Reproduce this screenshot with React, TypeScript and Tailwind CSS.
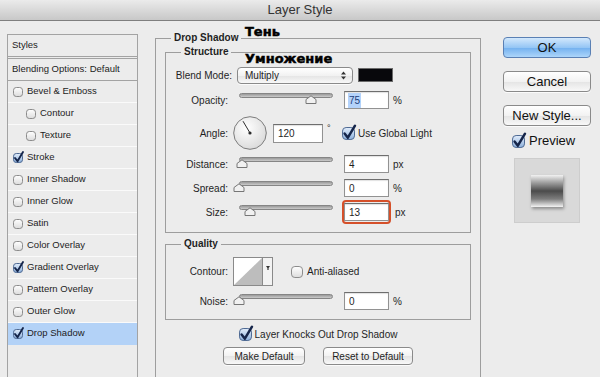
import React, { useId } from 'react';

const styleRows: { label: string; checked?: boolean; indent?: boolean; active?: boolean }[] = [
  { label: 'Bevel & Emboss' },
  { label: 'Contour', indent: true },
  { label: 'Texture', indent: true },
  { label: 'Stroke', checked: true },
  { label: 'Inner Shadow' },
  { label: 'Inner Glow' },
  { label: 'Satin' },
  { label: 'Color Overlay' },
  { label: 'Gradient Overlay', checked: true },
  { label: 'Pattern Overlay' },
  { label: 'Outer Glow' },
  { label: 'Drop Shadow', checked: true, active: true },
];

const CheckBox: React.FC<{ checked?: boolean; size?: number }> = ({ checked = false, size = 10 }) => {
  const id = 'cb' + useId().replace(/[^a-zA-Z0-9]/g, '');
  const s = size;
  return (
    <svg width={s} height={s} viewBox={`0 0 ${s} ${s}`} className="shrink-0 overflow-visible">
      <defs>
        <linearGradient id={id} x1="0" y1="0" x2="0" y2="1">
          <stop offset="0" stopColor={checked ? '#e2edfb' : '#ffffff'} />
          <stop offset="1" stopColor={checked ? '#8db0dc' : '#dcdcdc'} />
        </linearGradient>
      </defs>
      <rect
        x="0.5"
        y="0.5"
        width={s - 1}
        height={s - 1}
        rx={s * 0.28}
        fill={`url(#${id})`}
        stroke={checked ? '#4f6a93' : '#8c8c8c'}
      />
      {checked && (
        <path
          d={`M${s * 0.2} ${s * 0.5} L${s * 0.45} ${s * 0.82} L${s * 1.0} ${-s * 0.1}`}
          fill="none"
          stroke="#15254a"
          strokeWidth={s * 0.19}
          strokeLinecap="round"
          strokeLinejoin="round"
        />
      )}
    </svg>
  );
};

// track is 94px wide, thumb centre given in px from the left end
const Slider: React.FC<{ pos: number }> = ({ pos }) => (
  <div className="relative ml-[11px] h-[18px] w-[94px] shrink-0">
    <div className="mt-[2px] h-[5px] w-full rounded-full border border-[#858585] bg-gradient-to-b from-[#9a9a9a] to-[#cbcbcb]" />
    <svg className="absolute top-[4px]" style={{ left: pos - 6 }} width="12" height="9" viewBox="0 0 12 9">
      <path d="M1 8.5 V4.5 L6 0.8 L11 4.5 V8.5 Z" fill="#f1f1f1" stroke="#767676" strokeLinejoin="round" />
    </svg>
  </div>
);

const Field: React.FC<{ value: string; selected?: boolean }> = ({ value, selected }) => (
  <div className="flex h-[18px] w-[45px] shrink-0 items-center border border-[#929292] border-t-[#6e6e6e] bg-white pl-[3px] shadow-[inset_0_1px_1px_rgba(0,0,0,0.12)]">
    {selected ? <span className="bg-[#b4d3fb] px-[1px] text-[#1c3f7a]">{value}</span> : <span className="pl-[1px]">{value}</span>}
  </div>
);

const Dial = () => (
  <svg width="34" height="34" viewBox="0 0 34 34" className="ml-[5px] shrink-0">
    <defs>
      <radialGradient id="dialbg" cx="0.4" cy="0.35" r="0.7">
        <stop offset="0" stopColor="#ffffff" />
        <stop offset="1" stopColor="#d9d9d9" />
      </radialGradient>
    </defs>
    <circle cx="17" cy="17" r="16.3" fill="url(#dialbg)" stroke="#7b7b7b" />
    <line x1="17" y1="17" x2="10" y2="5.2" stroke="#2b2b2b" strokeWidth="1" />
    <circle cx="17" cy="17" r="1.6" fill="#2b2b2b" />
  </svg>
);

const Contour = () => (
  <svg width="40" height="29" viewBox="0 0 40 29" className="ml-[5px] shrink-0">
    <rect x="0.5" y="0.5" width="39" height="28" fill="#ffffff" stroke="#8a8a8a" />
    <path d="M1 28 L29 1 L29 28 Z" fill="#bdbdbd" />
    <line x1="29.5" y1="0.5" x2="29.5" y2="28.5" stroke="#8a8a8a" />
    <rect x="30" y="1" width="9" height="27" fill="#f3f3f3" />
    <path d="M33 9 L37 9 L35.6 11 L35.6 13 L34.4 13 L34.4 11 Z" fill="#333" />
  </svg>
);

const btn =
  'flex items-center justify-center rounded-[4px] border border-[#8a8a8a] bg-[linear-gradient(to_bottom,#ffffff,#f2f2f2_50%,#e4e4e4_51%,#f8f8f8)] shadow-[0_1px_0_rgba(255,255,255,0.8)]';

export default function App() {
  return (
    <div className="relative h-[377px] w-[600px] overflow-hidden bg-[#ececec] font-['Liberation_Sans',Arial,sans-serif] text-[10px] text-[#1f1f1f]">
      {/* title bar */}
      <div className="flex h-[21px] items-center justify-center border-b border-[#7f7f7f] bg-gradient-to-b from-[#ebebeb] to-[#c8c8c8] text-[13px] text-[#333]">
        Layer Style
      </div>

      <div className="flex items-start">
        {/* styles list */}
        <div className="ml-[7px] mt-[13px] h-[360px] w-[131px] shrink-0 border border-b-0 border-[#a3a3a3] text-[9.5px] text-[#1d1d1d]">
          <div className="flex h-[22px] items-center border-b border-[#a3a3a3] pl-[4px]">Styles</div>
          <div className="mt-[1px] flex h-[23px] items-center border-y border-[#a3a3a3] pl-[4px]">
            Blending Options: Default
          </div>
          {styleRows.map((r) => (
            <div
              key={r.label}
              className={`flex h-[22px] items-center border-b ${r.active ? 'border-[#b3d2f7] bg-[#b3d2f7]' : 'border-[#fafafa]'} ${r.indent ? 'pl-[18px]' : 'pl-[5px]'}`}
            >
              <CheckBox checked={r.checked} />
              <span className="ml-[4px]">{r.label}</span>
            </div>
          ))}
        </div>

        {/* drop shadow group */}
        <div className="relative ml-[17px] mt-[17px] h-[400px] w-[326px] shrink-0 border border-b-0 border-[#9d9d9d]">
          <span className="absolute -top-[7px] left-[15px] bg-[#ececec] px-[3px] text-[10px] font-bold leading-[12px]">
            Drop Shadow
          </span>

          {/* structure */}
          <div className="relative mx-[9px] mt-[13px] border border-[#9d9d9d] pb-[11px] pt-[13px]">
            <span className="absolute -top-[7px] left-[15px] bg-[#ececec] px-[3px] text-[10px] font-bold leading-[12px]">
              Structure
            </span>

            <div className="flex h-[18px] items-center">
              <span className="w-[66px] shrink-0 text-right">Blend Mode:</span>
              <div className={`${btn} ml-[5px] h-[17px] w-[116px] !justify-between pl-[7px] pr-[6px]`}>
                <span>Multiply</span>
                <svg width="5" height="9" viewBox="0 0 5 9">
                  <path d="M0 3.5 L2.5 0.5 L5 3.5 Z M0 5.5 L2.5 8.5 L5 5.5 Z" fill="#333" />
                </svg>
              </div>
              <div className="ml-[5px] h-[14px] w-[35px] border border-[#6b6b6b] bg-[#08080c]" />
            </div>

            <div className="mt-[7px] flex h-[18px] items-center">
              <span className="w-[62px] shrink-0 text-right">Opacity:</span>
              <Slider pos={71.5} />
              <div className="ml-[11px]">
                <Field value="75" selected />
              </div>
              <span className="ml-[4px]">%</span>
            </div>

            <div className="mt-[7px] flex h-[34px] items-center">
              <span className="w-[62px] shrink-0 text-right">Angle:</span>
              <Dial />
              <div className="ml-[6px] flex h-[19px] w-[50px] items-center border border-[#929292] border-t-[#6e6e6e] bg-white pl-[4px] shadow-[inset_0_1px_1px_rgba(0,0,0,0.12)]">
                120
              </div>
              <span className="ml-[4px] w-[6px] -translate-y-[4px] text-[9px]">°</span>
              <div className="ml-[9px] flex items-center">
                <CheckBox checked size={13} />
                <span className="ml-[3px]">Use Global Light</span>
              </div>
            </div>

            <div className="mt-[5px] flex h-[18px] items-center">
              <span className="w-[62px] shrink-0 text-right">Distance:</span>
              <Slider pos={3} />
              <div className="ml-[11px]">
                <Field value="4" />
              </div>
              <span className="ml-[4px]">px</span>
            </div>

            <div className="mt-[6px] flex h-[18px] items-center">
              <span className="w-[62px] shrink-0 text-right">Spread:</span>
              <Slider pos={0} />
              <div className="ml-[11px]">
                <Field value="0" />
              </div>
              <span className="ml-[4px]">%</span>
            </div>

            <div className="mt-[6px] flex h-[18px] items-center">
              <span className="w-[62px] shrink-0 text-right">Size:</span>
              <Slider pos={11} />
              <div className="ml-[9px] rounded-[4px] border-[2px] border-[#d5502a] py-[1px]">
                <Field value="13" />
              </div>
              <span className="ml-[4px]">px</span>
            </div>
          </div>

          {/* quality */}
          <div className="relative mx-[9px] mt-[11px] border border-[#9d9d9d] pb-[9px] pt-[12px]">
            <span className="absolute -top-[7px] left-[15px] bg-[#ececec] px-[3px] text-[10px] font-bold leading-[12px]">
              Quality
            </span>
            <div className="flex h-[29px] items-center">
              <span className="w-[62px] shrink-0 text-right">Contour:</span>
              <Contour />
              <div className="ml-[18px] flex items-center">
                <CheckBox size={12} />
                <span className="ml-[4px]">Anti-aliased</span>
              </div>
            </div>
            <div className="mt-[6px] flex h-[18px] items-center">
              <span className="w-[62px] shrink-0 text-right">Noise:</span>
              <Slider pos={0} />
              <div className="ml-[11px]">
                <Field value="0" />
              </div>
              <span className="ml-[4px]">%</span>
            </div>
          </div>

          <div className="mt-[8px] flex h-[13px] items-center justify-center">
            <CheckBox checked size={13} />
            <span className="ml-[3px]">Layer Knocks Out Drop Shadow</span>
          </div>

          <div className="mt-[6px] flex justify-center gap-[18px]">
            <div className={`${btn} h-[18px] w-[82px]`}>Make Default</div>
            <div className={`${btn} h-[18px] w-[90px]`}>Reset to Default</div>
          </div>
        </div>

        {/* buttons */}
        <div className="ml-[22px] mt-[16px] flex w-[88px] shrink-0 flex-col text-[13px] text-[#111]">
          <div className="flex h-[21px] items-center justify-center rounded-[4px] border border-[#5a80b4] bg-[linear-gradient(to_bottom,#d3e8fc,#95c6f5_50%,#72b0ef_51%,#acd5fa)]">
            OK
          </div>
          <div className={`${btn} mt-[13px] h-[21px]`}>Cancel</div>
          <div className={`${btn} mt-[13px] h-[21px]`}>New Style...</div>
          <div className="ml-[9px] mt-[8px] flex h-[14px] items-center">
            <CheckBox checked size={13} />
            <span className="ml-[4px]">Preview</span>
          </div>
          <div className="ml-[11px] mt-[10px] flex h-[65px] w-[66px] items-center justify-center border border-[#cdcdcd] bg-[#d9d9d9]">
            <div className="h-[32px] w-[32px] bg-[linear-gradient(to_bottom,#f2f2f2_0%,#a5a5a5_22%,#4b4b4b_50%,#7d7d7d_75%,#f4f4f4_100%)] shadow-[1px_2px_3px_rgba(0,0,0,0.35)]" />
          </div>
        </div>
      </div>

      {/* annotations */}
      <span className="absolute left-[245px] top-[25px] font-['DejaVu_Sans',sans-serif] text-[13px] font-bold leading-none text-black [-webkit-text-stroke:0.5px_black]">
        Тень
      </span>
      <span className="absolute left-[245px] top-[52px] font-['DejaVu_Sans',sans-serif] text-[13px] font-bold leading-none text-black [-webkit-text-stroke:0.5px_black]">
        Умножение
      </span>
    </div>
  );
}
